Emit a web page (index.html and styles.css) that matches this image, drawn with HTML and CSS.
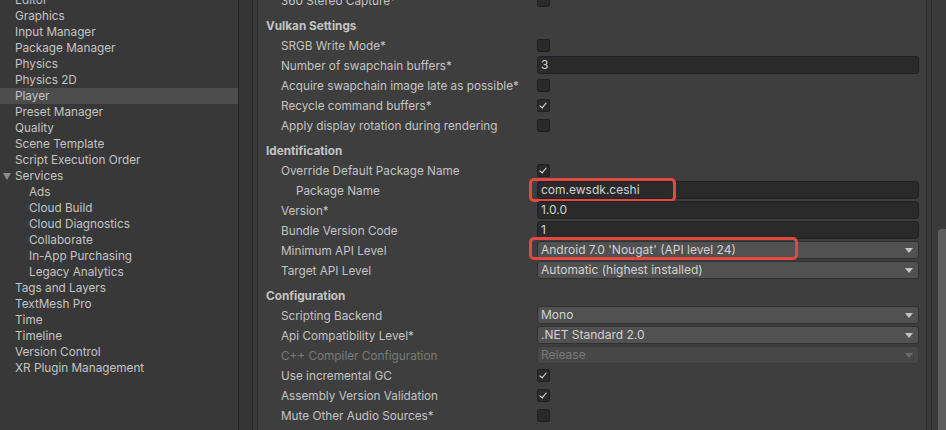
FILE: index.html
```html
<!DOCTYPE html>
<html lang="en">
 <head>
 <meta charset="UTF-8">
 <title>Project Settings - Player</title>
 <link rel="stylesheet" href="styles.css">
 </head>
 <body>
 <div class="window">
  <ul class="tree">
   <li class="item">Editor</li>
   <li class="item">Graphics</li>
   <li class="item">Input Manager</li>
   <li class="item">Package Manager</li>
   <li class="item">Physics</li>
   <li class="item">Physics 2D</li>
   <li class="item on">Player</li>
   <li class="item">Preset Manager</li>
   <li class="item">Quality</li>
   <li class="item">Scene Template</li>
   <li class="item">Script Execution Order</li>
   <li class="item"><span class="fold"></span>Services</li>
   <li class="item sub">Ads</li>
   <li class="item sub">Cloud Build</li>
   <li class="item sub">Cloud Diagnostics</li>
   <li class="item sub">Collaborate</li>
   <li class="item sub">In-App Purchasing</li>
   <li class="item sub">Legacy Analytics</li>
   <li class="item">Tags and Layers</li>
   <li class="item">TextMesh Pro</li>
   <li class="item">Time</li>
   <li class="item">Timeline</li>
   <li class="item">Version Control</li>
   <li class="item">XR Plugin Management</li>
  </ul>

  <div class="gutter"></div>

  <div class="inspector">
   <div class="row"><span class="lbl">360 Stereo Capture*</span><span class="box"></span></div>

   <div class="head">Vulkan Settings</div>
   <div class="row"><span class="lbl">SRGB Write Mode*</span><span class="box"></span></div>
   <div class="row"><span class="lbl">Number of swapchain buffers*</span><span class="field">3</span></div>
   <div class="row"><span class="lbl">Acquire swapchain image late as possible*</span><span class="box"></span></div>
   <div class="row"><span class="lbl">Recycle command buffers*</span><span class="box checked"></span></div>
   <div class="row"><span class="lbl">Apply display rotation during rendering</span><span class="box"></span></div>

   <div class="head">Identification</div>
   <div class="row"><span class="lbl">Override Default Package Name</span><span class="box checked"></span></div>
   <div class="row"><span class="lbl deep">Package Name</span><span class="field">com.ewsdk.ceshi</span><span class="mark mark-pkg"></span></div>
   <div class="row"><span class="lbl">Version*</span><span class="field">1.0.0</span></div>
   <div class="row"><span class="lbl">Bundle Version Code</span><span class="field">1</span></div>
   <div class="row"><span class="lbl">Minimum API Level</span><span class="drop">Android 7.0 'Nougat' (API level 24)</span><span class="mark mark-api"></span></div>
   <div class="row"><span class="lbl">Target API Level</span><span class="drop">Automatic (highest installed)</span></div>

   <div class="head">Configuration</div>
   <div class="row"><span class="lbl">Scripting Backend</span><span class="drop">Mono</span></div>
   <div class="row"><span class="lbl">Api Compatibility Level*</span><span class="drop">.NET Standard 2.0</span></div>
   <div class="row off"><span class="lbl">C++ Compiler Configuration</span><span class="drop">Release</span></div>
   <div class="row"><span class="lbl">Use incremental GC</span><span class="box checked"></span></div>
   <div class="row"><span class="lbl">Assembly Version Validation</span><span class="box checked"></span></div>
   <div class="row"><span class="lbl">Mute Other Audio Sources*</span><span class="box"></span></div>
  </div>

  <div class="edge"></div>
  <div class="scroll"><div class="thumb"></div></div>
 </div>
 </body>
</html>
```

FILE: styles.css
```css
* {
padding: 0px;
margin: 0px;
box-sizing: border-box;
}

html,
body {
width: 100%;
height: 100%;
overflow: hidden;
background: #383838;
}

body {
font-family: Inter, "Noto Sans", sans-serif;
font-size: 11.75px;
color: #c4c4c4;
}

.window {
display: flex;
height: 430px;
}

/* left tree */
.tree {
list-style: none;
width: 239px;
flex: none;
margin-top: -8px;
border-right: 1px solid #232323;
background: #383838;
}

.tree .item {
height: 16px;
line-height: 17px;
padding-left: 15px;
white-space: nowrap;
position: relative;
}

.tree .item.sub {
padding-left: 29px;
}

.tree .item.on {
background: #4d4d4d;
}

.fold {
position: absolute;
left: 3px;
top: 5px;
border-left: 4px solid transparent;
border-right: 4px solid transparent;
border-top: 7px solid #8c8c8c;
}

.gutter {
width: 19px;
flex: none;
background: #353535;
border-right: 1px solid #2a2a2a;
box-shadow: inset -4px 0 0 #3a3a3a, inset -5px 0 0 #282828;
}

/* inspector */
.inspector {
flex: 1;
background: #3e3e3e;
padding: 0 7px 0 8px;
margin-top: -10px;
}

.row {
display: flex;
align-items: center;
height: 20px;
position: relative;
}

.lbl {
width: 271px;
flex: none;
padding: 2px 0 0 15px;
white-space: nowrap;
}

.lbl.deep {
padding-left: 30px;
}

.head {
height: 20px;
line-height: 23px;
margin-top: 5px;
font-weight: 700;
}

.box {
width: 13px;
height: 13px;
border: 1px solid #202020;
border-radius: 2px;
background: #2a2a2a;
position: relative;
}

.box.checked::after {
content: "";
position: absolute;
left: 3px;
top: 1px;
width: 3px;
height: 6px;
border-right: 1.6px solid #e8e8e8;
border-bottom: 1.6px solid #e8e8e8;
transform: rotate(40deg);
}

.field,
.drop {
flex: 1;
height: 18px;
line-height: 16px;
padding-left: 3px;
border-radius: 3px;
color: #d2d2d2;
font-size: 12px;
white-space: nowrap;
}

.field {
background: #2a2a2a;
border: 1px solid #212121;
}

.drop {
background: #515151;
border: 1px solid #303030;
position: relative;
}

.drop::after {
content: "";
position: absolute;
right: 5px;
top: 6px;
border-left: 4px solid transparent;
border-right: 4px solid transparent;
border-top: 5px solid #c4c4c4;
}

.off .lbl,
.off .drop {
color: #7a7a7a;
}

.off .drop {
background: #474747;
border-color: #3a3a3a;
}

.off .drop::after {
border-top-color: #6a6a6a;
}

/* red highlight frames */
.mark {
position: absolute;
top: -2px;
left: 263px;
height: 24px;
border: 3px solid #e5483f;
border-radius: 5px;
}

.mark-pkg {
width: 147px;
}

.mark-api {
top: -3px;
height: 23px;
width: 269px;
}

.edge {
width: 6px;
flex: none;
background: #3a3a3a;
border-left: 1px solid #2a2a2a;
border-right: 1px solid #2a2a2a;
}

.scroll {
width: 14px;
flex: none;
background: #3a3a3a;
padding: 229px 0 0 6px;
}

.thumb {
height: 100%;
background: #5d5d5d;
border-radius: 4px 0 0 0;
}
```
